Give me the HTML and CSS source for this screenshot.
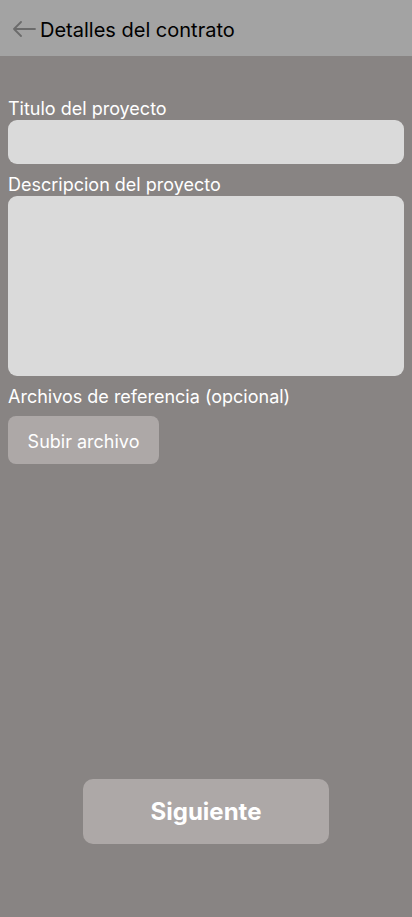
FILE: index.html
```html
<!DOCTYPE html>
<html lang="es">
<head>
<meta charset="utf-8">
<meta name="viewport" content="width=device-width, initial-scale=1">
<link rel="stylesheet" href="styles.css">
<title>Detalles del contrato</title>
</head>
<body>
<div class="app">
  <header class="header">
    <svg class="back" width="24" height="16" viewBox="0 0 24 16" aria-hidden="true">
      <path d="M23 8H2M9 1L2 8l7 7" fill="none" stroke="#6b6b6b" stroke-width="1.8" stroke-linecap="round" stroke-linejoin="round"/>
    </svg>
    <h1 class="title">Detalles del contrato</h1>
  </header>
  <main class="form">
    <label class="label label-first">Titulo del proyecto</label>
    <div class="input"></div>
    <label class="label label-next">Descripcion del proyecto</label>
    <div class="textarea"></div>
    <label class="label label-next">Archivos de referencia (opcional)</label>
    <button class="upload" type="button">Subir archivo</button>
  </main>
  <div class="footer">
    <button class="next" type="button">Siguiente</button>
  </div>
</div>
</body>
</html>
```
FILE: styles.css
```css
* { box-sizing: border-box; }
html, body { margin: 0; padding: 0; }
body {
  background: #888483;
  font-family: Inter, "Noto Sans", sans-serif;
  color: #ffffff;
}
.app {
  display: flex;
  flex-direction: column;
  min-height: 917px;
}
.header {
  height: 56px;
  background: #a3a3a3;
  display: flex;
  align-items: center;
  padding: 3px 0 0 12px;
}
.back { display: block; flex: none; margin-top: -1px; }
.title {
  margin: 0 0 0 4px;
  font-size: 20px;
  font-weight: 400;
  color: #000000;
  line-height: 24px;
}
.form {
  display: flex;
  flex-direction: column;
  align-items: flex-start;
  padding: 0 8px;
}
.label {
  font-size: 18px;
  line-height: 22px;
  color: #ffffff;
}
.label-first { margin-top: 42px; }
.label-next { margin-top: 10px; }
.input {
  width: 100%;
  height: 44px;
  background: #dadada;
  border-radius: 9px;
}
.textarea {
  width: 100%;
  height: 180px;
  background: #dadada;
  border-radius: 9px;
}
.upload {
  margin-top: 8px;
  width: 151px;
  height: 48px;
  border: none;
  border-radius: 8px;
  background: #ada8a7;
  color: #ffffff;
  font-family: Inter, "Noto Sans", sans-serif;
  font-size: 18px;
  padding: 3px 0 0;
}
.footer {
  margin-top: auto;
  display: flex;
  justify-content: center;
  padding-bottom: 73px;
}
.next {
  width: 246px;
  height: 65px;
  border: none;
  border-radius: 10px;
  background: #ada8a7;
  color: #ffffff;
  font-family: Inter, "Noto Sans", sans-serif;
  font-size: 24px;
  font-weight: 700;
  padding: 0;
}
```
